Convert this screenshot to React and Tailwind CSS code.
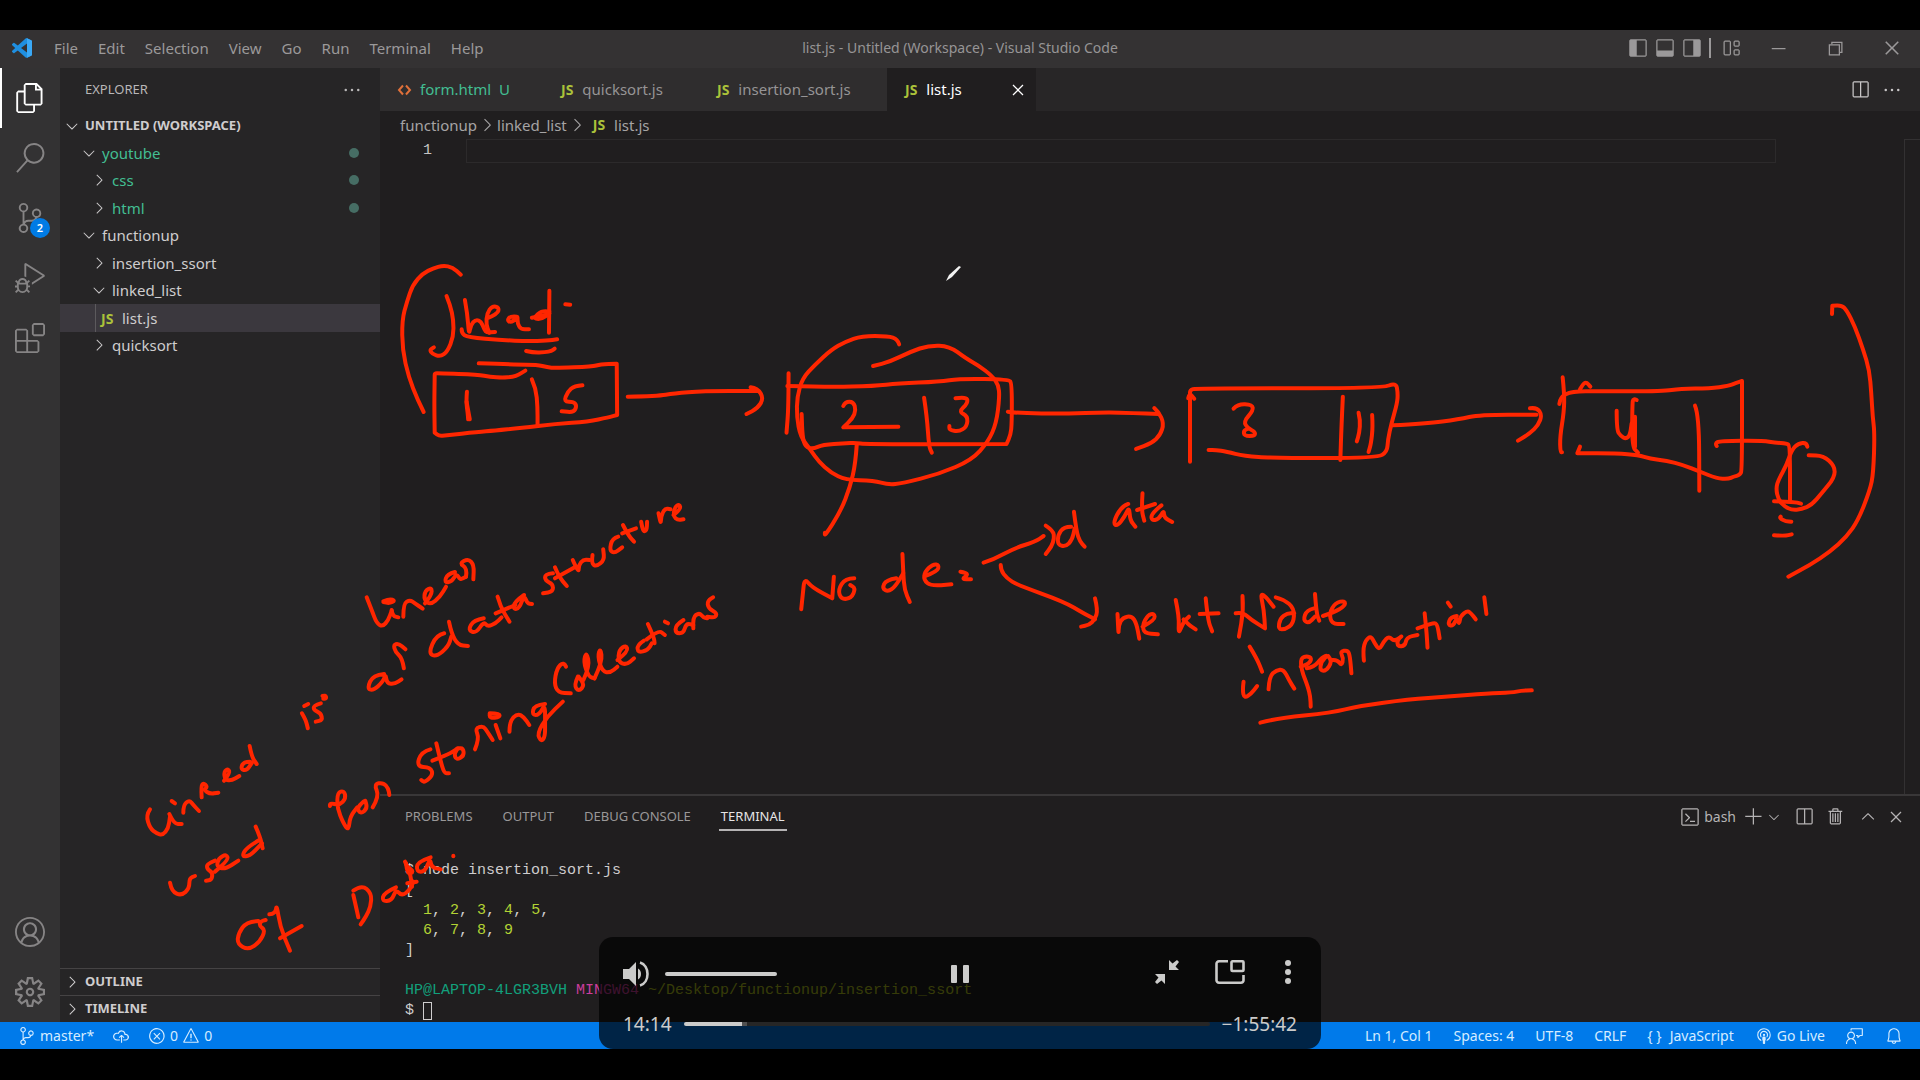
import React from "react";
import {
  VscFiles, VscSearch, VscSourceControl, VscDebugAlt, VscExtensions, VscAccount, VscSettingsGear,
  VscLayoutSidebarLeft, VscLayoutPanel, VscLayoutSidebarRight, VscLayout, VscChromeMinimize,
  VscChromeRestore, VscChromeClose, VscSplitHorizontal, VscEllipsis, VscClose, VscTerminal, VscAdd,
  VscChevronDown, VscChevronRight, VscChevronUp, VscTrash, VscCloudUpload, VscError, VscWarning,
  VscBroadcast, VscFeedback, VscBell,
} from "react-icons/vsc";

const MENUS = ["File", "Edit", "Selection", "View", "Go", "Run", "Terminal", "Help"];

/* Freehand ink, grouped by board area; each line is one pen stroke. */
const INK = [
  {
    place: "translate(380 250) scale(0.40816 0.33333)",
    strokes: `107,486 92,450 70,380 55,300 54,210 66,155 80,105 105,70 130,55 155,46 178,52 198,74
163,138 172,165 180,210 180,260 165,305 148,320 128,312 122,300 132,292
208,150 214,190 218,256 222,225 235,208 248,215 256,240 262,248 282,246
262,205 288,192 292,172 275,168 262,190 260,225 268,248
335,200 320,198 312,210 320,218 335,205 337,198 337,220 345,238 365,238
415,185 398,180 375,205 395,208 415,190
372,203 408,194
415,122 414,248
200,238 200,250 215,262 300,270 360,274 410,272 434,268
358,303 375,308 405,307 420,303 428,296
454,163 466,164
242,340 330,344 385,344 410,352 430,354 520,350 540,343 580,341 580,341 581,495 581,495 560,502 510,515 430,522 345,534 280,542 240,546 160,556 145,558 134,548 134,548 133,460 134,380 134,370 145,370 240,374 270,381 300,383 325,381 340,374 356,362
372,388 382,415 386,470 386,525
213,425 211,455 215,490 216,508
220,508 212,455
496,406 476,408 460,425 450,455 475,455 482,468 475,487 445,484
607,440 680,438 720,430 790,423 925,423
908,412 925,415 940,445 925,475 898,492
1001,370 1001,470 996,548
998,408 1100,411 1210,408 1270,400 1370,395 1420,386 1540,388 1548,400 1548,520 1545,555 1535,582 1535,582 1190,583 1165,578 1140,580 1085,584 1060,597 1042,590 1035,560 1033,492
1272,283 1268,268 1245,258 1180,258 1140,275 1105,300 1065,345 1035,385 1022,440 1021,500 1030,560 1055,600 1075,635 1105,668 1140,690 1210,692 1245,704 1280,700 1370,672 1450,630 1490,575 1510,520 1518,440 1515,405 1500,378 1465,345 1435,325 1395,288 1345,286 1300,305 1250,335 1208,348
1135,468 1140,455 1160,455 1166,480 1158,505 1135,532 1135,532 1270,530
1333,443 1340,500 1345,590 1352,608
1410,445 1438,440 1440,460 1418,485 1440,498 1438,530 1418,545 1395,540 1395,528
1168,585 1165,640 1152,710 1128,785 1090,858 1090,848
1032,1078 1036,1030 1040,985 1058,1012 1108,1045 1108,1045 1112,980
1162,985 1140,985 1122,1020 1130,1048 1155,1045 1165,1015 1152,1005
1265,985 1240,990 1230,1015 1245,1025 1262,1010 1282,970
1280,912 1282,970 1285,1020 1298,1056
1335,978 1365,965 1370,945 1355,942 1335,965 1332,990 1350,1008 1400,1003
1422,965 1435,968 1440,975 1425,988 1448,988`,
  },
  {
    place: "translate(980 280) scale(0.35714 0.33333)",
    strokes: `78,395 105,400 240,401 350,397 430,399 500,402
488,384 500,395 515,430 505,465 480,490 437,507
588,545 588,345 588,330 605,325 1125,325 1165,308 1170,340 1168,370 1152,430 1142,480 1140,515 1112,534 820,534 740,528 690,515 660,510 640,510
583,355 586,338 600,356
1016,350 1012,440 1009,540
710,386 722,372 762,374 765,392 738,425 750,445 770,455 770,468 740,468 738,452 752,445
1060,398 1065,420 1062,460 1055,484
1098,405 1100,440 1095,490 1088,516
1155,436 1250,431 1340,418 1400,404 1558,404
10,848 40,838 95,805 155,785 178,768
184,737 205,752 208,775 200,800 184,822
255,740 235,740 218,765 218,795 240,800 258,780 265,745
263,695 270,755 280,785 293,800
415,672 395,680 372,730 385,738 405,710 418,680 420,720 435,740
455,640 452,690 460,722
440,690 490,672
508,676 480,700 480,722 500,718 515,690 515,712 538,726
58,855 58,870 75,895 105,915 235,965 290,1000 322,1018
322,955 330,990 322,1018 305,1035 283,1040
385,1002 388,1070 388,1035 400,1012 425,1008 438,1030 446,1076
455,1040 490,1020 488,1000 470,1005 455,1035 460,1060 498,1063
548,960 558,1010 555,1065 570,1025 585,1010
570,1018 585,1035 604,1048
632,955 638,1020 650,1054
615,1002 668,1000
735,948 738,990 725,1070
716,1000 735,996 760,1020 798,1045 798,1045 795,990 785,940 800,950 822,980
828,952 850,958 880,985 878,1030 855,1048 835,1048 840,1015 860,1000 880,1000
935,985 915,990 905,1020 920,1030 938,1010
938,942 942,1000 950,1022
960,1008 990,998 1022,978 1022,962 995,968 978,1000 985,1032 1018,1032
755,1100 775,1135 790,1175
738,1205 735,1230 740,1255 760,1240 776,1218
808,1228 810,1190 830,1170 850,1168 865,1200 880,1226
898,1160 918,1155 930,1135 915,1128 898,1135 900,1170 918,1220 925,1250 926,1280
915,1165 935,1162 958,1132 975,1125 955,1145 952,1172 970,1172 985,1145 975,1128
985,1140 1000,1138 1012,1158 1018,1135 1008,1115 1030,1110 1036,1130 1040,1180
1075,1142 1072,1110 1080,1080 1095,1068 1105,1090 1118,1110 1130,1085 1145,1068 1160,1085 1185,1065 1168,1080 1170,1100 1190,1098 1195,1072 1225,1065
1245,1000 1250,1050 1253,1103
1225,1045 1265,1030 1280,1030 1287,1075
1335,1008 1318,1010 1310,1035 1325,1038 1335,1012 1342,1035 1345,1008 1365,992 1375,1000 1388,1018
1310,968 1318,980
1412,952 1418,1002
785,1328 830,1315 985,1298 1060,1278 1200,1258 1310,1250 1420,1240 1490,1238 1515,1232 1545,1231`,
  },
  {
    place: "translate(1400 290) scale(0.33333)",
    strokes: `390,355 410,352 426,375 415,405 390,430 354,452
488,262 493,310 492,365 480,440 481,487 486,487
478,342 480,322 515,304 600,304 790,304 840,296 930,295 985,288 1010,278 1026,273 1026,273 1026,540 1020,555 1000,560 985,567 950,565 900,545 850,525 800,512 750,506 715,495 650,490 532,490 532,490 540,470
540,298 550,280 560,277 571,290
650,362 650,420 662,438 678,447 690,435 695,400
710,330 700,325 697,340 696,470 714,488
705,380 705,470
885,347 897,375 898,602
950,468 945,460 960,453 1090,452 1125,458 1160,460 1170,468 1170,630
1222,470 1220,458 1195,460 1175,480 1160,525 1135,570 1128,595 1135,630 1155,650 1175,660 1205,658 1235,645 1265,610 1304,562 1304,528 1270,497 1226,496
1122,634 1180,635 1203,641
1142,680 1138,684 1158,694 1174,695
1122,736 1155,738 1175,733
1296,72 1297,47 1297,47 1325,46 1340,60 1365,110 1390,180 1408,240 1414,310 1418,380 1424,430 1420,550 1410,600 1375,690 1340,740 1290,785 1230,825 1165,860`,
  },
  {
    place: "translate(120 480) scale(0.39541 0.33333)",
    strokes: `668,582 640,585 625,625 640,632 665,605 672,582 675,610 695,612 712,598
718,565 714,535 696,515 692,495 704,490 722,508
820,460 800,465 780,520 800,530 830,500 838,470
832,425 838,460 855,495 880,498
920,415 895,420 880,450 900,460 920,425 930,440 950,430 965,412
955,350 962,380 985,425
950,400 1000,375
1022,345 998,365 995,388 1010,385 1022,345 1030,370 1042,372
1095,280 1075,282 1075,302 1095,312 1095,335 1070,340
1100,262 1110,290 1130,318
1100,295 1150,262
1145,240 1160,280 1160,255 1172,238 1188,240
1195,225 1192,250 1205,260 1225,240 1222,208
1260,170 1245,175 1238,210 1250,220 1270,202
1272,135 1285,165 1300,185
1270,160 1305,145
1318,125 1322,155 1332,152 1333,125
1362,100 1368,135 1368,110 1378,85 1392,88
1400,105 1418,88 1415,72 1402,82 1400,110 1410,120 1425,118
460,700 470,720 475,745
466,678 476,672
508,670 490,676 490,690 508,700 512,720 495,725
512,648 520,645 522,656 514,656
785,808 762,815 750,860 785,862 792,885 770,908 762,900
800,790 810,840 820,880 832,880
790,842 838,820 858,800 845,820 850,840 870,828 868,805 855,805
950,735 962,775
935,700 960,700 960,712 935,714 935,700
985,755 985,725 1005,700 1022,712 1035,735
1075,672 1048,675 1042,705 1060,705 1075,672 1075,730 1075,770 1065,785 1055,760 1080,710 1120,665
1128,560 1122,545 1105,565 1098,610 1108,638 1140,640
1158,590 1148,615 1160,635 1175,615 1160,590
1172,600 1188,560 1180,515 1172,545 1185,590 1200,595
1200,595 1220,545 1215,503 1208,530 1220,575 1240,578 1258,560
1258,540 1285,515 1280,495 1262,510 1260,545 1280,555 1300,535
1325,482 1308,495 1310,518 1335,510 1345,490
1335,432 1350,470 1352,490
1332,478 1362,450 1378,465
1378,425 1386,430
1425,420 1405,435 1405,460 1425,460 1432,430 1450,435
1450,445 1448,412 1465,398 1475,412 1485,415
1500,352 1485,362 1488,385 1510,400 1505,413 1485,410`,
  },
  {
    place: "translate(100 720) scale(0.33333)",
    strokes: `150,268 138,285 150,325 170,340 188,346 205,325 210,290
208,282 222,312 245,312
215,243 225,250
250,278 250,255 268,240 280,255 297,273
305,232 303,200 310,188 322,200 312,210 330,222 355,218
372,182 390,160 385,146 372,155 375,180 395,182 418,168
450,125 430,125 422,148 440,152 456,128
449,78 455,110 470,132
210,488 215,515 245,527 268,505 268,475 285,468
345,422 320,432 322,448 338,458 335,480 318,482
345,455 385,422 380,402 355,415 350,440 375,448 415,422
478,360 440,382 425,410 450,408 486,370
467,320 480,350 488,385
690,258 688,248 718,256 738,235 732,212 712,218 712,265 730,310 746,332 750,290 772,262
790,245 770,262 782,282 802,265 796,242
818,262 838,230 822,192 850,188 865,205 868,225
475,603 440,605 415,640 412,672 445,690 480,665 496,630 478,618 482,604 497,600
508,583 526,582 530,552 540,620 570,692
540,655 605,618
760,525 768,560 775,592
760,512 785,494 815,520 812,560 798,590 782,613
888,502 852,518 846,544 875,542 888,508 905,528 930,510 940,485
915,425 930,455 936,500
922,490 950,485
918,430 922,465 942,455 922,440
992,412 952,425 950,455 975,455 990,415 995,442 1022,448
1060,407 1060,409`,
  },
  {
    place: "translate(360 480) scale(0.33333)",
    strokes: `20,352 35,390 50,430 68,440 85,420 95,392
95,390 98,408 115,412
70,364 88,356 106,362 88,370 70,366
130,410 130,370 150,360 165,370 188,386
195,370 215,345 215,322 195,332 192,360 212,374 240,350 258,320
285,276 262,282 253,308 275,305 290,280 300,300 318,290
318,290 322,265 298,250 325,236 342,255 340,298
345,808 358,775 345,745 370,738 382,755 398,780`,
  },
];

/* Rounds the polyline of a pen stroke through the midpoints of its segments. */
function penPath(line) {
  const p = line.trim().split(" ").map((s) => s.split(",").map(Number));
  let d = `M${p[0][0]} ${p[0][1]}`;
  for (let i = 1; i < p.length - 1; i++) {
    const mx = (p[i][0] + p[i + 1][0]) / 2;
    const my = (p[i][1] + p[i + 1][1]) / 2;
    d += `Q${p[i][0]} ${p[i][1]} ${mx} ${my}`;
  }
  const e = p[p.length - 1];
  return `${d}L${e[0]} ${e[1]}`;
}

function Ink() {
  return (
    <svg viewBox="0 0 1920 1080" className="pointer-events-none absolute inset-0 h-full w-full" fill="none" aria-hidden="true">
      {INK.map((g) => (
        <g key={g.place} transform={g.place} stroke="#ff2600" strokeWidth="4" strokeLinecap="round" strokeLinejoin="round">
          {g.strokes.split("\n").map((s) => (
            <path key={s} d={penPath(s)} vectorEffect="non-scaling-stroke" />
          ))}
        </g>
      ))}
      <path d="M946 281l3-6 10-9 2 1-9 10z" fill="#f2f2f2" />
    </svg>
  );
}

function Logo() {
  return (
    <svg viewBox="0 0 100 100" className="size-5" aria-hidden="true">
      <path d="M71 99a6 6 0 0 0 4 0l21-10a6 6 0 0 0 4-6V17a6 6 0 0 0-4-6L75 1a6 6 0 0 0-7 1L29 38 12 25a4 4 0 0 0-5 0l-6 5a4 4 0 0 0 0 6l15 14L1 64a4 4 0 0 0 0 6l6 5a4 4 0 0 0 5 0l17-13 39 36zM75 27v46L45 50z" fill="#1f8fe0" fillRule="evenodd" />
      <path d="M75 27V1l21 10a6 6 0 0 1 4 6v66a6 6 0 0 1-4 6L75 99z" fill="#3aa8f5" />
    </svg>
  );
}

function IconButton({ label, className = "", children }) {
  return (
    <button type="button" aria-label={label} className={`flex items-center justify-center ${className}`}>
      {children}
    </button>
  );
}

const Js = () => <span className="text-sm font-bold text-[#abc23a]">JS</span>;

function TitleBar() {
  return (
    <header className="relative flex h-[38px] shrink-0 items-center justify-between bg-[#343233] pb-[2px] text-[#9b999a]">
      <div className="flex items-center pl-3">
        <Logo />
        <nav className="flex pl-3">
          {MENUS.map((m) => (
            <button type="button" key={m} className="px-[10px]">{m}</button>
          ))}
        </nav>
      </div>
      <h1 className="absolute left-1/2 -translate-x-1/2 whitespace-nowrap text-sm text-[#979596]">list.js - Untitled (Workspace) - Visual Studio Code</h1>
      <div className="flex items-center">
        <div className="flex items-center gap-[7px] text-xl">
          <IconButton label="Toggle primary side bar"><VscLayoutSidebarLeft /></IconButton>
          <IconButton label="Toggle panel"><VscLayoutPanel /></IconButton>
          <IconButton label="Toggle secondary side bar"><VscLayoutSidebarRight /></IconButton>
          <span className="h-5 w-[2px] bg-[#9b999a]" />
          <IconButton label="Customize layout" className="pl-[3px]"><VscLayout /></IconButton>
        </div>
        <div className="flex pl-2">
          <IconButton label="Minimize" className="w-[57px]"><VscChromeMinimize className="size-5" /></IconButton>
          <IconButton label="Restore" className="w-[57px]"><VscChromeRestore className="size-5" /></IconButton>
          <IconButton label="Close window" className="w-[57px]"><VscChromeClose className="size-5" /></IconButton>
        </div>
      </div>
    </header>
  );
}

function ActivityBar() {
  return (
    <nav className="flex w-[60px] shrink-0 flex-col bg-[#333233] text-3xl text-[#868485]">
      <IconButton label="Explorer" className="h-[60px] border-l-2 border-white pr-[2px] text-white"><VscFiles /></IconButton>
      <IconButton label="Search" className="h-[60px]"><VscSearch /></IconButton>
      <div className="relative">
        <IconButton label="Source control" className="h-[60px] w-full"><VscSourceControl /></IconButton>
        <span className="absolute top-[30px] left-[30px] flex size-5 items-center justify-center rounded-full bg-[#007be5] text-[11px] font-semibold text-white">2</span>
      </div>
      <IconButton label="Run and debug" className="h-[60px]"><VscDebugAlt /></IconButton>
      <IconButton label="Extensions" className="h-[60px]"><VscExtensions /></IconButton>
      <div className="grow" />
      <IconButton label="Accounts" className="h-[60px]"><VscAccount /></IconButton>
      <IconButton label="Manage" className="h-[60px]"><VscSettingsGear /></IconButton>
    </nav>
  );
}

const TREE = [
  { name: "youtube", open: true, pad: "pl-5", git: true },
  { name: "css", pad: "pl-[30px]", git: true },
  { name: "html", pad: "pl-[30px]", git: true },
  { name: "functionup", open: true, pad: "pl-5" },
  { name: "insertion_ssort", pad: "pl-[30px]" },
  { name: "linked_list", open: true, pad: "pl-[30px]" },
  { name: "list.js", file: true },
  { name: "quicksort", pad: "pl-[30px]" },
];

function TreeRow({ item }) {
  if (item.file) {
    return (
      <button type="button" className="flex items-center bg-[#3b383e] pl-[35px] text-left">
        <span className="h-full w-px bg-[#5c5a5d]" />
        <span className="w-[26px] pl-[5px]"><Js /></span>
        {item.name}
      </button>
    );
  }
  return (
    <button type="button" className={`flex items-center gap-1 text-left ${item.pad}`}>
      {item.open ? <VscChevronDown className="size-[18px] text-[#c8c6c7]" /> : <VscChevronRight className="size-[18px] text-[#c8c6c7]" />}
      <span className={item.git ? "text-[#42be92]" : ""}>{item.name}</span>
      {item.git && <span className="mr-[21px] ml-auto size-[10px] rounded-full bg-[#466d64]" />}
    </button>
  );
}

function Sidebar() {
  return (
    <aside className="flex w-80 shrink-0 flex-col bg-[#262526] text-[#cfcdce]">
      <div className="flex h-11 items-center justify-between pr-[18px] pl-[25px] text-[13px] text-[#b9b7b8]">
        <h2>EXPLORER</h2>
        <IconButton label="Views and more actions"><VscEllipsis className="size-5" /></IconButton>
      </div>
      <button type="button" className="flex h-[27px] items-center gap-1 pl-[3px] text-[13px] font-bold">
        <VscChevronDown className="size-[18px]" />UNTITLED (WORKSPACE)
      </button>
      <div className="grid h-[220px] grid-rows-8">
        {TREE.map((item) => <TreeRow key={item.name} item={item} />)}
      </div>
      <div className="grow" />
      {["OUTLINE", "TIMELINE"].map((s) => (
        <button type="button" key={s} className="flex h-[27px] items-center gap-1 border-t border-[#454344] pl-[3px] text-[13px] font-bold">
          <VscChevronRight className="size-[18px]" />{s}
        </button>
      ))}
    </aside>
  );
}

function Tabs() {
  return (
    <div className="flex h-[43px] shrink-0 justify-between bg-[#282627]">
      <div className="flex text-[#969495]">
        <button type="button" className="flex w-[163px] items-center gap-2 bg-[#2f2d2e] pl-[17px] text-[#42be92]">
          <svg viewBox="0 0 15 12" className="h-3 w-[15px]" fill="none" stroke="#e0703a" strokeWidth="2" aria-hidden="true">
            <path d="M6 1.500L2 6l4 4.500M9 1.500L13 6l-4 4.500" />
          </svg>
          form.html<span>U</span>
        </button>
        <button type="button" className="flex w-[156px] items-center gap-[9px] bg-[#2f2d2e] pl-[18px]"><Js />quicksort.js</button>
        <button type="button" className="flex w-[188px] items-center gap-[9px] bg-[#2f2d2e] pl-[18px]"><Js />insertion_sort.js</button>
        <div className="flex w-[149px] items-center bg-[#201e1f] pl-[18px] text-white">
          <button type="button" className="flex grow items-center gap-[9px]"><Js />list.js</button>
          <IconButton label="Close list.js" className="pr-2"><VscClose className="size-5" /></IconButton>
        </div>
      </div>
      <div className="flex items-center gap-3 pr-[18px] text-xl text-[#c8c6c7]">
        <IconButton label="Split editor"><VscSplitHorizontal /></IconButton>
        <IconButton label="More actions"><VscEllipsis /></IconButton>
      </div>
    </div>
  );
}

function Editor() {
  return (
    <section className="flex min-h-0 grow flex-col">
      <Tabs />
      <nav className="flex h-7 shrink-0 items-center pl-5 text-[#a6a4a5]">
        <a href="#functionup">functionup</a>
        <VscChevronRight className="size-5" />
        <a href="#linked_list">linked_list</a>
        <VscChevronRight className="mr-[6px] size-5" />
        <a href="#list" className="flex items-center gap-[9px]"><Js />list.js</a>
      </nav>
      <div className="flex min-h-0 grow">
        <span className="w-[86px] pr-[34px] text-right font-['Liberation_Mono',monospace] leading-6 text-[#c6c4c5]">1</span>
        <textarea aria-label="list.js" rows={1} className="h-6 grow resize-none border border-[#2c2a2b] bg-transparent outline-none" />
        <span className="w-[128px]" />
        <span className="w-4 border-t border-l border-[#333132]" />
      </div>
    </section>
  );
}

function NumberRow({ values, last }) {
  return (
    <div>
      {"  "}
      {values.map((v, i) => (
        <React.Fragment key={v}>
          <span className="text-[#b3d334]">{v}</span>
          {i < values.length - 1 ? ", " : last ? "" : ","}
        </React.Fragment>
      ))}
    </div>
  );
}

function Panel() {
  return (
    <section className="flex h-[228px] shrink-0 flex-col border-t-2 border-[#393738]">
      <div className="flex h-[42px] shrink-0 items-center justify-between pr-[14px] pl-[23px] text-[#9a9899]">
        <div className="flex gap-[26px] text-[13px]">
          <button type="button" className="px-[2px]">PROBLEMS</button>
          <button type="button" className="px-[2px]">OUTPUT</button>
          <button type="button" className="px-[2px]">DEBUG CONSOLE</button>
          <button type="button" className="relative px-[2px] text-[#e6e4e5]">TERMINAL<span className="absolute inset-x-0 -bottom-1 h-[2px] bg-[#b5b3b4]" /></button>
        </div>
        <div className="flex items-center text-xl text-[#b5b3b4]">
          <button type="button" className="flex items-center gap-1 text-sm"><VscTerminal className="size-5" />bash</button>
          <IconButton label="New terminal" className="pl-2"><VscAdd /></IconButton>
          <IconButton label="Launch profile" className="pl-[2px]"><VscChevronDown className="size-4" /></IconButton>
          <IconButton label="Split terminal" className="pl-3"><VscSplitHorizontal /></IconButton>
          <IconButton label="Kill terminal" className="pl-3"><VscTrash /></IconButton>
          <IconButton label="Maximize panel" className="pl-3"><VscChevronUp /></IconButton>
          <IconButton label="Close panel" className="pl-2"><VscClose /></IconButton>
        </div>
      </div>
      <div className="pt-[23px] pl-[25px] font-['Liberation_Mono',monospace] leading-5 whitespace-pre text-[#cfcdce]">
        <div>$ node insertion_sort.js</div>
        <div>[</div>
        <NumberRow values={[1, 2, 3, 4, 5]} />
        <NumberRow values={[6, 7, 8, 9]} last />
        <div>]</div>
        <div className="pt-5">
          <span className="text-[#12a07c]">HP@LAPTOP-4LGR3BVH</span> <span className="text-[#cc3d9c]">MINGW64</span> <span className="text-[#b5c71c]">~/Desktop/functionup/insertion_ssort</span>
        </div>
        <div className="flex items-center gap-[9px]">$<span className="h-[18px] w-[9px] border border-[#cfcdce]" /></div>
      </div>
    </section>
  );
}

function StatusBar() {
  return (
    <footer className="flex h-[27px] shrink-0 items-center justify-between bg-[#007aea] pr-[17px] pl-[18px] text-sm text-[#d5ecff]">
      <div className="flex items-center gap-[18px]">
        <button type="button" className="flex items-center gap-1"><VscSourceControl className="size-[18px]" />master*</button>
        <IconButton label="Publish changes"><VscCloudUpload className="size-[18px]" /></IconButton>
        <button type="button" className="flex items-center gap-1"><VscError className="size-[18px]" />0<VscWarning className="size-[18px]" />0</button>
      </div>
      <div className="flex items-center gap-[21px]">
        <button type="button">Ln 1, Col 1</button>
        <button type="button">Spaces: 4</button>
        <button type="button">UTF-8</button>
        <button type="button">CRLF</button>
        <button type="button" className="flex gap-2"><span>{"{ }"}</span>JavaScript</button>
        <button type="button" className="flex items-center gap-1"><VscBroadcast className="size-[18px]" />Go Live</button>
        <IconButton label="Feedback"><VscFeedback className="size-[18px]" /></IconButton>
        <IconButton label="Notifications"><VscBell className="size-[18px]" /></IconButton>
      </div>
    </footer>
  );
}

function Player() {
  return (
    <div className="absolute bottom-[31px] left-1/2 flex h-28 w-[722px] -translate-x-1/2 flex-col rounded-[14px] bg-black/70 px-6 text-[19px] text-[#cbcbca]">
      <div className="relative flex h-[74px] items-center justify-between">
        <div className="flex items-center gap-4">
          <button type="button" aria-label="Mute">
            <svg viewBox="0 0 26 26" className="size-[26px]" fill="currentColor" aria-hidden="true">
              <path d="M0 8h6l7-7v24l-7-7H0zM15 7.500c4 2 4 9 0 11z" />
              <path d="M17 1.500c10 3 10 20 0 23" fill="none" stroke="currentColor" strokeWidth="2.600" />
            </svg>
          </button>
          <input type="range" aria-label="Volume" defaultValue={100} className="h-1 w-28 appearance-none rounded-full bg-[#cbcbca] [&::-webkit-slider-thumb]:size-0 [&::-webkit-slider-thumb]:appearance-none" />
        </div>
        <button type="button" aria-label="Pause" className="absolute left-1/2 -translate-x-1/2">
          <svg viewBox="0 0 18 18" className="size-[18px]" fill="currentColor" aria-hidden="true">
            <rect width="6" height="18" rx="1" /><rect x="12" width="6" height="18" rx="1" />
          </svg>
        </button>
        <div className="flex items-center pb-1">
          <button type="button" aria-label="Exit full screen" className="pr-9">
            <svg viewBox="0 0 24 24" className="size-6" fill="currentColor" aria-hidden="true">
              <path d="M14 0v10h10l-3.500-3.500L24 2l-2-2-4.500 3.500zM10 24V14H0l3.500 3.500L0 22l2 2 4.500-3.500z" />
            </svg>
          </button>
          <button type="button" aria-label="Picture in picture" className="pr-10">
            <svg viewBox="0 0 30 24" className="h-6 w-[30px]" fill="none" stroke="currentColor" strokeWidth="2.600" aria-hidden="true">
              <path d="M13 1.300H4A2.500 2.500 0 0 0 1.500 4v16A2.500 2.500 0 0 0 4 22.700h22a2.500 2.500 0 0 0 2.500-2.500V15" />
              <rect x="16.500" y="1.300" width="12" height="9.700" rx="1" />
            </svg>
          </button>
          <button type="button" aria-label="More options" className="pr-[6px]">
            <svg viewBox="0 0 6 24" className="h-6 w-[6px]" fill="currentColor" aria-hidden="true">
              <circle cx="3" cy="3" r="3" /><circle cx="3" cy="12" r="3" /><circle cx="3" cy="21" r="3" />
            </svg>
          </button>
        </div>
      </div>
      <div className="flex h-[26px] items-center gap-3">
        <span>14:14</span>
        <input type="range" aria-label="Seek" defaultValue={11} className="h-1 min-w-0 grow appearance-none rounded-full bg-[linear-gradient(to_right,#cbcbca_0_11%,#505050_11%_12%,#262626_12%)] [&::-webkit-slider-thumb]:size-0 [&::-webkit-slider-thumb]:appearance-none" />
        <span>−1:55:42</span>
      </div>
    </div>
  );
}

export default function App() {
  return (
    <div className="relative flex h-screen flex-col overflow-hidden bg-black pt-[30px] pb-[31px] font-['Noto_Sans',sans-serif] text-[15px]">
      <TitleBar />
      <main className="flex min-h-0 grow">
        <ActivityBar />
        <Sidebar />
        <div className="flex min-w-0 grow flex-col bg-[#201e1f]">
          <Editor />
          <Panel />
        </div>
      </main>
      <StatusBar />
      <Ink />
      <Player />
    </div>
  );
}
